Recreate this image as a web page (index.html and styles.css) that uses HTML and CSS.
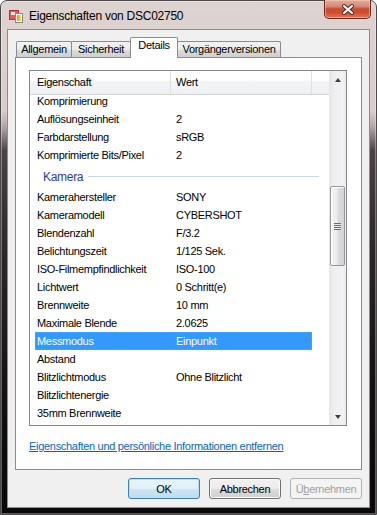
FILE: index.html
```html
<!DOCTYPE html>
<html lang="de">
<head>
    <meta charset="UTF-8">
    <title>Eigenschaften von DSC02750</title>
    <link rel="stylesheet" href="styles.css">
</head>
<body>

<div class="window">
    <div class="titlebar">
        <svg class="app-icon" width="16" height="16" viewBox="0 0 16 16">
            <rect x="1.5" y="2.5" width="9" height="9" fill="#e25a5a" stroke="#a83434"/>
            <rect x="3" y="4" width="4" height="3" fill="#fbe3e3"/>
            <rect x="7.5" y="5.5" width="7" height="9" fill="#fff" stroke="#8a8a8a"/>
            <rect x="9" y="7" width="2" height="6" fill="#f0a030"/>
            <rect x="11" y="7" width="2" height="6" fill="#f6d24a"/>
        </svg>
        <span class="title">Eigenschaften von DSC02750</span>
        <div class="close-btn">
            <svg width="14" height="11" viewBox="0 0 14 11">
                <path d="M3 2 L11 9 M11 2 L3 9" stroke="#4a2a24" stroke-width="4" stroke-linecap="round"/>
                <path d="M3 2 L11 9 M11 2 L3 9" stroke="#f4f4f4" stroke-width="2.2" stroke-linecap="round"/>
            </svg>
        </div>
    </div>

    <div class="client">
        <div class="tabs">
            <div class="tab tab-allgemein">Allgemein</div>
            <div class="tab tab-sicherheit">Sicherheit</div>
            <div class="tab tab-details active">Details</div>
            <div class="tab tab-versionen">Vorgängerversionen</div>
        </div>

        <div class="tab-page">
            <div class="listview">
                <div class="lv-main">
                    <div class="lv-header">
                        <div class="hd-name">Eigenschaft</div>
                        <div class="hd-value">Wert</div>
                        <div class="hd-rest"></div>
                    </div>
                    <div class="lv-body">
                        <div class="lv-rows">
                            <div class="row"><span class="name">Komprimierung</span><span class="value"></span></div>
                            <div class="row"><span class="name">Auflösungseinheit</span><span class="value">2</span></div>
                            <div class="row"><span class="name">Farbdarstellung</span><span class="value">sRGB</span></div>
                            <div class="row"><span class="name">Komprimierte Bits/Pixel</span><span class="value">2</span></div>

                            <div class="group"><span class="group-title">Kamera</span><span class="group-line"></span></div>

                            <div class="row"><span class="name">Kamerahersteller</span><span class="value">SONY</span></div>
                            <div class="row"><span class="name">Kameramodell</span><span class="value">CYBERSHOT</span></div>
                            <div class="row"><span class="name">Blendenzahl</span><span class="value">F/3.2</span></div>
                            <div class="row"><span class="name">Belichtungszeit</span><span class="value">1/125 Sek.</span></div>
                            <div class="row"><span class="name">ISO-Filmempfindlichkeit</span><span class="value">ISO-100</span></div>
                            <div class="row"><span class="name">Lichtwert</span><span class="value">0 Schritt(e)</span></div>
                            <div class="row"><span class="name">Brennweite</span><span class="value">10 mm</span></div>
                            <div class="row"><span class="name">Maximale Blende</span><span class="value">2.0625</span></div>
                            <div class="row selected"><span class="name">Messmodus</span><span class="value">Einpunkt</span></div>
                            <div class="row"><span class="name">Abstand</span><span class="value"></span></div>
                            <div class="row"><span class="name">Blitzlichtmodus</span><span class="value">Ohne Blitzlicht</span></div>
                            <div class="row"><span class="name">Blitzlichtenergie</span><span class="value"></span></div>
                            <div class="row"><span class="name">35mm Brennweite</span><span class="value"></span></div>
                        </div>
                    </div>
                </div>

                <div class="scrollbar">
                    <div class="sb-btn"><span class="arrow-up"></span></div>
                    <div class="sb-track">
                        <div class="sb-thumb">
                            <span class="grip"></span>
                        </div>
                    </div>
                    <div class="sb-btn"><span class="arrow-down"></span></div>
                </div>
            </div>

            <a class="remove-link" href="#">Eigenschaften und persönliche Informationen entfernen</a>
        </div>

        <div class="buttons">
            <button class="btn default">OK</button>
            <button class="btn">Abbrechen</button>
            <button class="btn disabled">Ü<u>b</u>ernehmen</button>
        </div>
    </div>
</div>

</body>
</html>
```

FILE: styles.css
```css
* {
    box-sizing: border-box;
}

body {
    margin: 0;
    background: #fff;
    font-family: "Liberation Sans", Arial, sans-serif;
    font-size: 11px;
    letter-spacing: -0.3px;
    color: #000;
}

/* Fensterrahmen (Aero) */
.window {
    width: 377px;
    height: 515px;
    border: 1px solid #4d494a;
    border-radius: 7px 7px 0 0;
    padding: 0 6px 6px 6px;
    display: flex;
    flex-direction: column;
    background: linear-gradient(to bottom,
        #ddd3d0 0px, #d7cdca 110px, #b3a9a9 125px,
        #4a4246 150px, #2a2527 260px, #121011 400px, #0a0909 515px);
    box-shadow: inset 0 0 0 1px rgba(255, 255, 255, 0.35);
}

.titlebar {
    height: 28px;
    display: flex;
    align-items: center;
    padding-left: 1px;
}

.app-icon {
    flex: none;
    margin-top: 2px;
}

.title {
    margin-left: 5px;
    margin-top: 2px;
    font-size: 12px;
    letter-spacing: -0.25px;
    color: #000;
}

.close-btn {
    margin-left: auto;
    align-self: flex-start;
    margin-top: -1px;
    margin-right: -1px;
    width: 47px;
    height: 19px;
    border: 1px solid #6a2a20;
    border-top: none;
    border-radius: 0 0 5px 5px;
    background: linear-gradient(to bottom,
        #e2a99c 0%, #d78b78 35%, #c84a2e 50%, #cf4f30 70%, #e27654 100%);
    box-shadow: inset 0 0 0 1px rgba(255, 220, 200, 0.45);
    display: flex;
    justify-content: center;
    align-items: center;
}

.client {
    flex: 1;
    background: #f0f0f0;
    border: 1px solid #8f8b8b;
    padding: 7px 7px 0 7px;
    display: flex;
    flex-direction: column;
}

/* Registerkarten */
.tabs {
    height: 20px;
    display: flex;
    align-items: flex-end;
    padding-left: 1px;
    position: relative;
    z-index: 1;
}

.tab {
    height: 16px;
    border: 1px solid #898c95;
    border-bottom: none;
    border-radius: 2px 2px 0 0;
    background: linear-gradient(to bottom, #f2f2f2 0%, #ebebeb 50%, #dddddd 51%, #cfcfcf 100%);
    text-align: center;
    line-height: 15px;
    margin-left: -1px;
}

.tab:first-child {
    margin-left: 0;
}

.tab-allgemein { width: 56px; }
.tab-sicherheit { width: 60px; }
.tab-details { width: 48px; }
.tab-versionen { width: 104px; }

.tab.active {
    height: 21px;
    margin-bottom: -1px;
    background: #fff;
    line-height: 15px;
    padding-bottom: 4px;
    position: relative;
    z-index: 2;
}

.tab-page {
    width: 347px;
    height: 413px;
    border: 1px solid #898c95;
    background: #fff;
    padding: 12px 0 0 13px;
}

/* Listenansicht */
.listview {
    width: 318px;
    height: 356px;
    border: 1px solid #828790;
    display: flex;
}

.lv-main {
    flex: 1;
    display: flex;
    flex-direction: column;
    min-width: 0;
}

.lv-header {
    height: 24px;
    flex: none;
    display: flex;
    border-bottom: 1px solid #d5d5d5;
    background: linear-gradient(to bottom, #ffffff 0%, #ffffff 40%, #f3f4f6 45%, #eef0f3 100%);
    line-height: 22px;
}

.hd-name {
    width: 141px;
    padding-left: 7px;
    border-right: 1px solid #dcdfe3;
}

.hd-value {
    width: 141px;
    padding-left: 5px;
    border-right: 1px solid #dcdfe3;
}

.hd-rest {
    flex: 1;
}

.lv-body {
    flex: 1;
    overflow: hidden;
}

.lv-rows {
    margin-top: -3px;
    padding-left: 5px;
}

.row {
    width: 277px;
    height: 18px;
    border: 1px solid transparent;
    line-height: 16px;
    display: flex;
    white-space: nowrap;
}

.row .name {
    width: 140px;
    padding-left: 1px;
    flex: none;
}

.row.selected {
    background: #3399ff;
    border: 1px dotted #e0862a;
    color: #fff;
}

.group {
    height: 24px;
    display: flex;
    align-items: center;
    padding-left: 8px;
    padding-top: 1px;
}

.group-title {
    font-size: 12px;
    color: #2b3a9e;
    letter-spacing: -0.3px;
}

.group-line {
    width: 231px;
    height: 1px;
    margin-left: 5px;
    background: #c9d6ee;
}

/* Bildlaufleiste */
.scrollbar {
    width: 17px;
    flex: none;
    display: flex;
    flex-direction: column;
    background: linear-gradient(to right, #e6e6e6 0%, #efefef 30%, #f2f2f2 80%, #ebebeb 100%);
}

.sb-btn {
    height: 17px;
    flex: none;
    display: flex;
    justify-content: center;
    align-items: center;
}

.arrow-up {
    width: 0;
    height: 0;
    border-left: 3.5px solid transparent;
    border-right: 3.5px solid transparent;
    border-bottom: 4px solid #404040;
}

.arrow-down {
    width: 0;
    height: 0;
    border-left: 3.5px solid transparent;
    border-right: 3.5px solid transparent;
    border-top: 4px solid #404040;
}

.sb-track {
    flex: 1;
}

.sb-thumb {
    margin: 98px 0 0 1px;
    width: 15px;
    height: 80px;
    border: 1px solid #979797;
    border-radius: 2px;
    background: linear-gradient(to right, #f5f5f5 0%, #ececec 45%, #dcdcdc 55%, #d4d4d4 100%);
    box-shadow: inset 1px 1px 0 #fff;
    display: flex;
    justify-content: center;
    align-items: center;
}

.grip {
    width: 7px;
    height: 7px;
    background: repeating-linear-gradient(to bottom, #6e6e6e 0px, #6e6e6e 1px, #e8e8e8 1px, #e8e8e8 2px);
}

.remove-link {
    display: block;
    margin-top: 13px;
    line-height: 14px;
    color: #0066cc;
    text-decoration: underline;
}

/* Schaltflächen */
.buttons {
    margin-top: 8px;
    display: flex;
    justify-content: flex-end;
    gap: 9px;
}

.btn {
    width: 72px;
    height: 21px;
    font-family: "Liberation Sans", Arial, sans-serif;
    font-size: 11px;
    letter-spacing: -0.3px;
    color: #000;
    border: 1px solid #707070;
    border-radius: 3px;
    background: linear-gradient(to bottom, #f2f2f2 0%, #ebebeb 50%, #dddddd 51%, #cfcfcf 100%);
    box-shadow: inset 0 0 0 1px #fcfcfc;
    padding: 0;
}

.btn.default {
    border-color: #3c7fb1;
    box-shadow: inset 0 0 0 1px #b6e1f7;
    background: linear-gradient(to bottom, #eaf5fc 0%, #e0eff9 50%, #cde6f6 51%, #c0dcef 100%);
}

.btn.disabled {
    border-color: #adb2b5;
    background: #f4f4f4;
    color: #a0a0a0;
    box-shadow: none;
}
```
